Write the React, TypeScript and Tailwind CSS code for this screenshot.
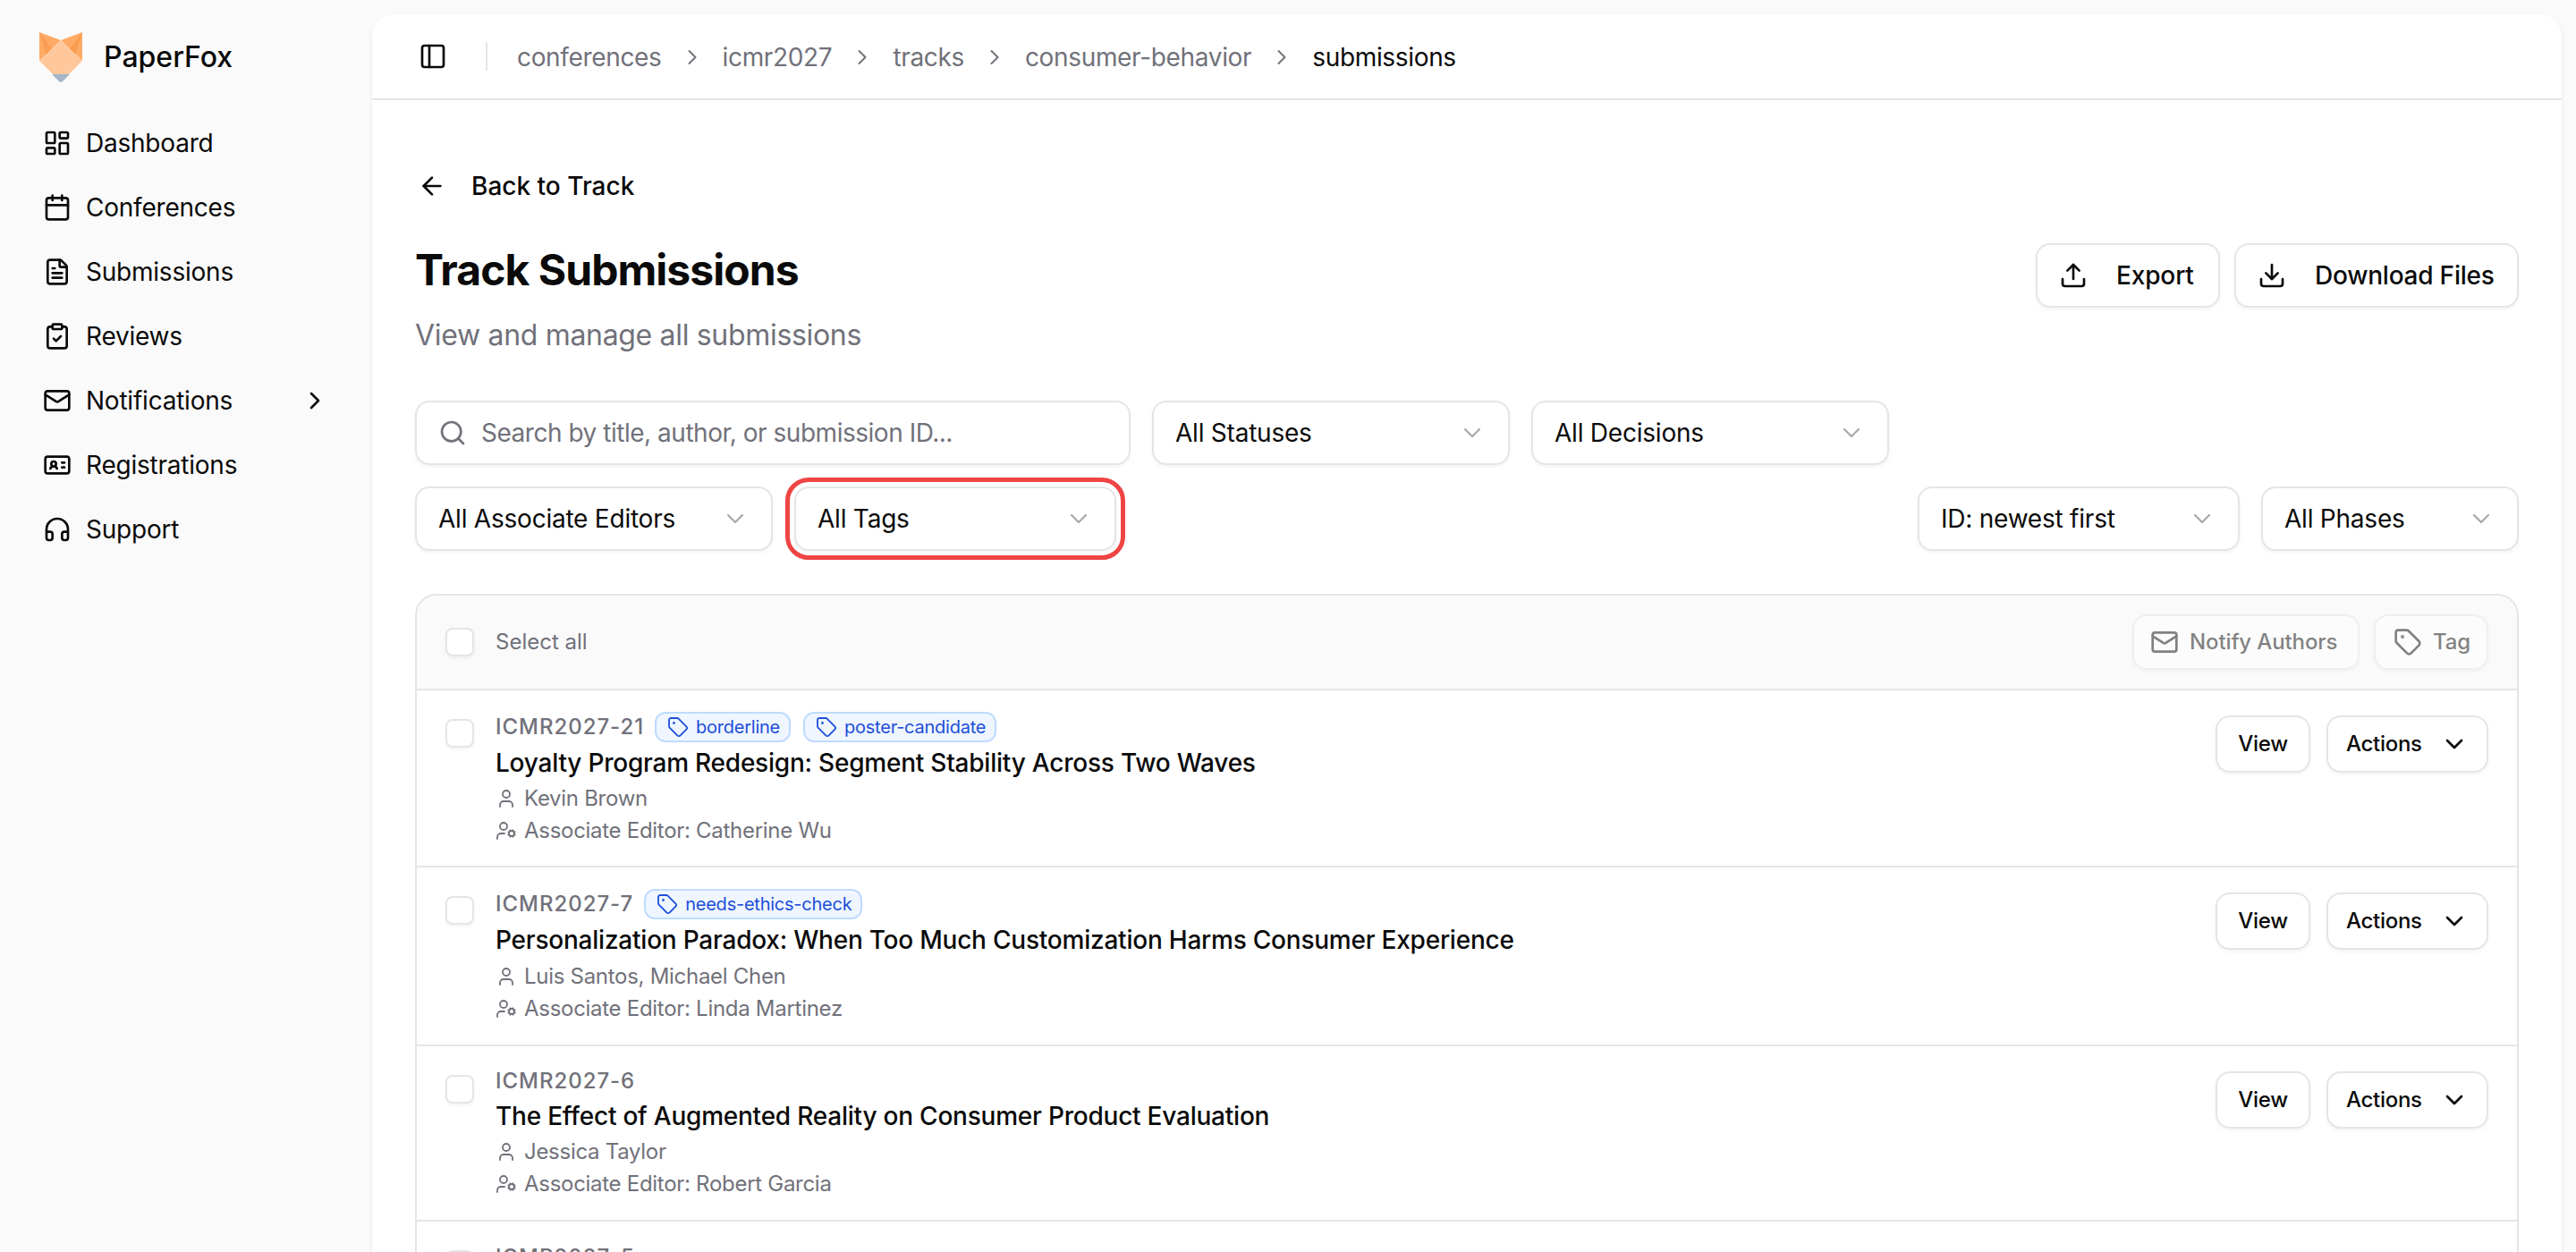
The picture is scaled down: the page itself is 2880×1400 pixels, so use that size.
import {
  ArrowLeft,
  Calendar,
  ChevronDown,
  ChevronRight,
  ClipboardCheck,
  Download,
  FileText,
  Headphones,
  IdCard,
  LayoutDashboard,
  Mail,
  PanelLeft,
  Search,
  Tag,
  Upload,
  User,
  UserCog,
} from "lucide-react";
import type { ReactNode } from "react";

const navItems = [
  { label: "Dashboard", icon: LayoutDashboard },
  { label: "Conferences", icon: Calendar },
  { label: "Submissions", icon: FileText },
  { label: "Reviews", icon: ClipboardCheck },
  { label: "Notifications", icon: Mail, chevron: true },
  { label: "Registrations", icon: IdCard },
  { label: "Support", icon: Headphones },
];

const crumbs = ["conferences", "icmr2027", "tracks", "consumer-behavior"];

const submissions = [
  {
    id: "ICMR2027-21",
    tags: ["borderline", "poster-candidate"],
    title: "Loyalty Program Redesign: Segment Stability Across Two Waves",
    authors: "Kevin Brown",
    editor: "Catherine Wu",
    bottom: "pb-[21px]",
    titleGap: "mt-[3px]",
    metaGap: "mt-0.5",
  },
  {
    id: "ICMR2027-7",
    tags: ["needs-ethics-check"],
    title: "Personalization Paradox: When Too Much Customization Harms Consumer Experience",
    authors: "Luis Santos, Michael Chen",
    editor: "Linda Martinez",
    bottom: "pb-[22px]",
    titleGap: "mt-[3px]",
    metaGap: "mt-[3px]",
  },
  {
    id: "ICMR2027-6",
    tags: [],
    title: "The Effect of Augmented Reality on Consumer Product Evaluation",
    authors: "Jessica Taylor",
    editor: "Robert Garcia",
    bottom: "pb-[22px]",
    titleGap: "mt-1",
    metaGap: "mt-0.5",
  },
];

function FoxLogo() {
  return (
    <svg viewBox="0 0 48 56" className="h-14 w-12 shrink-0">
      <polygon points="0,0 24,9 0,32" fill="#ffab66" />
      <polygon points="48,0 24,9 48,32" fill="#ffab66" />
      <polygon points="0,0 8,26 14,18" fill="#f99d52" />
      <polygon points="48,0 40,26 34,18" fill="#f99d52" />
      <polygon points="24,9 48,32 24,56 0,32" fill="#ffc89c" />
      <polygon points="14,47 34,47 26,55 24,56 22,55" fill="#a3b5c6" />
    </svg>
  );
}

function Select({ label, width, highlight }: { label: string; width: string; highlight?: boolean }) {
  return (
    <div
      className={`${width} flex h-[72px] items-center justify-between rounded-2xl border-2 border-[#e5e5e5] bg-white px-6 shadow-[0_2px_4px_rgba(0,0,0,0.05)] ${
        highlight ? "outline-[5px] outline-offset-[5px] outline-[#ef4444]" : ""
      }`}
    >
      <span className="text-[28px] tracking-[-0.008em] text-[#0a0a0a]">{label}</span>
      <ChevronDown className="size-8 text-[#a8a8a8]" strokeWidth={1.6} />
    </div>
  );
}

function OutlineButton({ children, className }: { children: ReactNode; className: string }) {
  return (
    <div
      className={`flex items-center rounded-2xl border-2 border-[#e5e5e5] bg-white shadow-[0_2px_4px_rgba(0,0,0,0.05)] ${className}`}
    >
      {children}
    </div>
  );
}

function Checkbox() {
  return (
    <div className="size-8 shrink-0 rounded-lg border-2 border-[#e5e5e5] bg-white shadow-[0_2px_4px_rgba(0,0,0,0.05)]" />
  );
}

export default function App() {
  return (
    <div className="flex h-[1400px] overflow-hidden bg-[#fafafa] font-['Inter',sans-serif] text-[#0a0a0a] antialiased">
      {/* Sidebar */}
      <aside className="w-[416px] shrink-0 px-8">
        <div className="flex h-[128px] items-start gap-6 pl-3 pt-9">
          <FoxLogo />
          <span className="mt-[8px] text-[32px] font-medium leading-10">PaperFox</span>
        </div>
        <nav className="flex flex-col gap-2">
          {navItems.map((item) => (
            <div key={item.label} className="flex h-16 items-center gap-4 px-4">
              <item.icon className="size-8 shrink-0" />
              <span className="text-[28px] tracking-[-0.008em]">{item.label}</span>
              {item.chevron && <ChevronRight className="ml-auto size-8" />}
            </div>
          ))}
        </nav>
      </aside>

      {/* Main card */}
      <main className="mr-4 mt-4 min-w-0 flex-1 rounded-t-3xl bg-white shadow-[0_2px_4px_rgba(0,0,0,0.08)]">
        <header className="flex h-24 items-center border-b-2 border-[#e5e5e5] pl-[52px]">
          <PanelLeft className="size-8 shrink-0" />
          <div className="ml-[43px] mr-[33px] h-8 w-0.5 bg-[#e5e5e5]" />
          <div className="flex items-center gap-5 pt-0.5 text-[28px] tracking-[-0.012em] text-[#71717a]">
            {crumbs.map((crumb) => (
              <div key={crumb} className="flex items-center gap-5">
                <span>{crumb}</span>
                <ChevronRight className="size-7" strokeWidth={1.7} />
              </div>
            ))}
            <span className="text-[#0a0a0a]">submissions</span>
          </div>
        </header>

        <div className="px-12">
          <div className="mt-[76px] flex h-10 items-center gap-7 pl-[3px]">
            <ArrowLeft className="size-8" />
            <span className="text-[28px] font-medium">Back to Track</span>
          </div>

          <div className="mt-11 flex items-start justify-between">
            <div>
              <h1 className="text-[48px] font-bold leading-[60px] tracking-[-0.02em]">Track Submissions</h1>
              <p className="mt-[23px] text-[32px] leading-10 tracking-[-0.01em] text-[#71717a]">
                View and manage all submissions
              </p>
            </div>
            <div className="flex gap-4">
              <OutlineButton className="h-[72px] w-[206px] gap-8 px-6">
                <Upload className="size-8 shrink-0" />
                <span className="text-[28px] font-medium tracking-[-0.005em]">Export</span>
              </OutlineButton>
              <OutlineButton className="h-[72px] w-[318px] gap-8 px-6">
                <Download className="size-8 shrink-0" />
                <span className="whitespace-nowrap text-[28px] font-medium tracking-[-0.008em]">Download Files</span>
              </OutlineButton>
            </div>
          </div>

          {/* Filters */}
          <div className="mt-[53px] flex gap-6">
            <div className="flex h-[72px] w-[800px] items-center gap-4 rounded-2xl border-2 border-[#e5e5e5] bg-white px-6 shadow-[0_2px_4px_rgba(0,0,0,0.05)]">
              <Search className="size-8 shrink-0 text-[#71717a]" />
              <span className="text-[28px] tracking-[-0.017em] text-[#71717a]">
                Search by title, author, or submission ID...
              </span>
            </div>
            <Select label="All Statuses" width="w-[400px]" />
            <Select label="All Decisions" width="w-[400px]" />
          </div>
          <div className="mt-6 flex items-center justify-between">
            <div className="flex gap-6">
              <Select label="All Associate Editors" width="w-[400px]" />
              <Select label="All Tags" width="w-[360px]" highlight />
            </div>
            <div className="flex gap-6">
              <Select label="ID: newest first" width="w-[360px]" />
              <Select label="All Phases" width="w-[288px]" />
            </div>
          </div>

          {/* Submissions table */}
          <section className="mt-12 rounded-t-3xl border-2 border-[#e5e5e5]">
            <div className="flex h-[106px] items-center justify-between rounded-t-3xl border-b-2 border-[#e5e5e5] bg-[#fafafa] pl-8 pr-8">
              <div className="flex items-center gap-6">
                <Checkbox />
                <span className="text-2xl text-[#71717a]">Select all</span>
              </div>
              <div className="flex gap-4 opacity-50">
                <OutlineButton className="h-[62px] w-[254px] gap-3 pl-[18px]">
                  <Mail className="size-8" />
                  <span className="text-2xl font-medium tracking-[-0.005em]">Notify Authors</span>
                </OutlineButton>
                <OutlineButton className="h-[62px] w-[128px] gap-3 pl-5">
                  <Tag className="size-8" />
                  <span className="text-2xl font-medium tracking-[-0.005em]">Tag</span>
                </OutlineButton>
              </div>
            </div>

            {submissions.map((s) => (
              <div key={s.id} className={`flex items-start justify-between border-b-2 border-[#e5e5e5] pl-8 pr-8 pt-6 ${s.bottom}`}>
                <div className="flex gap-6">
                  <div className="pt-2">
                    <Checkbox />
                  </div>
                  <div>
                    <div className={`flex items-center ${s.tags.length ? "h-[34px]" : "h-[30px]"}`}>
                      <span className="text-2xl font-medium tracking-[0.04em] text-[#71717a]">{s.id}</span>
                      {s.tags.map((tag) => (
                        <span
                          key={tag}
                          className="ml-3 flex h-[34px] items-center gap-2 rounded-xl border-2 border-[#bfdbfe] bg-[#eff6ff] pl-3 pr-2.5 text-[20px] tracking-[-0.012em] text-[#1d4ed8] [&+span]:ml-3.5"
                        >
                          <Tag className="size-6" strokeWidth={1.8} />
                          {tag}
                        </span>
                      ))}
                    </div>
                    <h3 className={`text-[28px] font-medium leading-10 tracking-[-0.008em] ${s.titleGap}`}>{s.title}</h3>
                    <div className={`flex h-9 items-center gap-2 text-2xl tracking-[-0.012em] text-[#71717a] ${s.metaGap}`}>
                      <User className="size-6" strokeWidth={1.8} />
                      {s.authors}
                    </div>
                    <div className="flex h-9 items-center gap-2 text-2xl tracking-[-0.012em] text-[#71717a]">
                      <UserCog className="size-6" strokeWidth={1.8} />
                      Associate Editor: {s.editor}
                    </div>
                  </div>
                </div>
                <div className="mt-1 flex gap-[18px]">
                  <OutlineButton className="h-[64px] w-[106px] justify-center">
                    <span className="text-2xl font-medium tracking-[-0.012em]">View</span>
                  </OutlineButton>
                  <OutlineButton className="h-[64px] w-[181px] gap-5 pl-5">
                    <span className="text-2xl font-medium tracking-[-0.012em]">Actions</span>
                    <ChevronDown className="size-8" />
                  </OutlineButton>
                </div>
              </div>
            ))}

            <div className="flex gap-6 pl-8 pt-6">
              <div className="pt-2">
                <Checkbox />
              </div>
              <span className="text-2xl font-medium tracking-[0.04em] text-[#71717a]">ICMR2027-5</span>
            </div>
          </section>
        </div>
      </main>
    </div>
  );
}
